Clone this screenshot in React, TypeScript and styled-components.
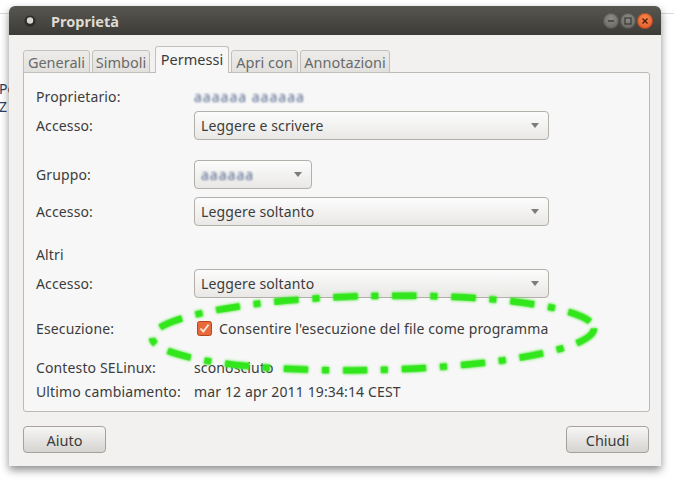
import React from 'react';
import styled, { createGlobalStyle } from 'styled-components';

const GlobalStyle = createGlobalStyle`
  html, body {
    margin: 0;
    padding: 0;
    background: #ffffff;
  }
  body {
    font-family: "Noto Sans", "DejaVu Sans", sans-serif;
    color: #3c3c3c;
  }
`;

const Desktop = styled.div`
  position: relative;
  width: 674px;
  height: 481px;
  overflow: hidden;
  background: #ffffff;
  padding: 6px 0 0 9px;
  box-sizing: border-box;
`;

const BackdropRule = styled.div`
  position: absolute;
  left: 0;
  right: 0;
  top: 13px;
  height: 1px;
  background: #d8d8d8;
`;

const BackdropText = styled.div`
  position: absolute;
  left: -1px;
  top: 80px;
  font-size: 14px;
  line-height: 18px;
  color: #2c3e63;
`;

const Window = styled.div`
  position: relative;
  z-index: 1;
  width: 652px;
  background: #f2f1f0;
  border-radius: 6px 6px 0 0;
  box-shadow: 0 4px 9px rgba(0, 0, 0, 0.45);
  display: flex;
  flex-direction: column;
`;

const TitleBar = styled.div`
  height: 29px;
  display: flex;
  align-items: center;
  padding: 0 8px 0 15px;
  border-radius: 6px 6px 0 0;
  background: linear-gradient(#57564f, #3c3b37);
`;

const Title = styled.span`
  margin-left: 15px;
  font-size: 14.5px;
  font-weight: bold;
  color: #dfdbd2;
  flex: 1;
`;

const Controls = styled.div`
  display: flex;
  gap: 1px;
`;

const CtlButton = styled.div<{ $close?: boolean }>`
  width: 16px;
  height: 16px;
  border-radius: 50%;
  display: flex;
  align-items: center;
  justify-content: center;
  background: ${(p) =>
    p.$close
      ? 'radial-gradient(circle at 50% 35%, #f7884e, #e0501f)'
      : 'radial-gradient(circle at 50% 35%, #8e8c86, #5f5d58)'};
  box-shadow: inset 0 0 0 1px rgba(0, 0, 0, 0.25);
`;

const Body = styled.div`
  padding: 12px 11px 13px 14px;
  display: flex;
  flex-direction: column;
`;

const TabStrip = styled.div`
  display: flex;
  align-items: flex-end;
  gap: 2px;
  height: 26px;
  margin-bottom: -1px;
  position: relative;
  z-index: 1;
`;

const Tab = styled.div<{ $w: number; $active?: boolean }>`
  width: ${(p) => p.$w}px;
  height: ${(p) => (p.$active ? 27 : 23)}px;
  margin-left: ${(p) => (p.$active ? 3 : 0)}px;
  box-sizing: border-box;
  border: 1px solid #c3c0bb;
  border-bottom: ${(p) => (p.$active ? 'none' : '1px solid #c3c0bb')};
  border-radius: 3px 3px 0 0;
  background: ${(p) => (p.$active ? '#f7f7f7' : 'linear-gradient(#edecea, #e3e1de)')};
  color: ${(p) => (p.$active ? '#3c3c3c' : '#6a6a6a')};
  font-size: 14.5px;
  display: flex;
  align-items: center;
  justify-content: center;
  padding-bottom: ${(p) => (p.$active ? 2 : 0)}px;
`;

const Panel = styled.div`
  height: 340px;
  box-sizing: border-box;
  border: 1px solid #bdbab5;
  border-radius: 0 3px 3px 3px;
  background: #f7f7f7;
  padding: 11px 12px 0 12px;
  display: flex;
  flex-direction: column;
`;

const Row = styled.div<{ $h?: number; $top?: number }>`
  display: grid;
  grid-template-columns: 158px auto;
  align-items: center;
  height: ${(p) => p.$h ?? 24}px;
  margin-top: ${(p) => p.$top ?? 0}px;
  font-size: 14px;
  letter-spacing: 0.13px;
`;

const Label = styled.span`
  color: #3c3c3c;
`;

const Value = styled.span`
  color: #3c3c3c;
`;

const Hidden = styled.span<{ $w: number }>`
  display: inline-block;
  width: ${(p) => p.$w}px;
  color: #56698f;
  filter: blur(1.1px);
  letter-spacing: 1px;
  white-space: nowrap;
  overflow: hidden;
`;

const Combo = styled.div<{ $w: number }>`
  width: ${(p) => p.$w}px;
  height: 29px;
  box-sizing: border-box;
  border: 1px solid #b3afa9;
  border-radius: 4px;
  background: linear-gradient(#fcfcfc, #e9e8e6);
  display: flex;
  align-items: center;
  justify-content: space-between;
  padding: 0 9px 0 6px;
  color: #3c3c3c;
`;

const Arrow = styled.span`
  width: 0;
  height: 0;
  border-left: 4px solid transparent;
  border-right: 4px solid transparent;
  border-top: 5px solid #7c7c7c;
`;

const CheckLine = styled.label`
  display: flex;
  align-items: center;
  gap: 7px;
  padding-left: 3px;
  color: #3c3c3c;
`;

const ButtonBar = styled.div`
  margin-top: 14px;
  display: flex;
  justify-content: space-between;
  padding-right: 1px;
`;

const DialogButton = styled.button`
  width: 83px;
  height: 27px;
  border: 1px solid #a5a29d;
  border-radius: 4px;
  background: linear-gradient(#f6f6f5, #d6d4d1);
  font-family: "Noto Sans", "DejaVu Sans", sans-serif;
  font-size: 14.5px;
  color: #3c3c3c;
  padding: 0;
`;

const Overlay = styled.svg`
  position: absolute;
  left: 0;
  top: 0;
  z-index: 2;
  pointer-events: none;
`;

const Checkbox = () => (
  <svg width="15" height="15" viewBox="0 0 15 15">
    <rect x="0.5" y="0.5" width="14" height="14" rx="2" fill="#e8693a" stroke="#b4471d" />
    <path d="M3.5 7.5 L6.3 10.6 L11.6 3.6" fill="none" stroke="#fbe6da" strokeWidth="1.8" />
  </svg>
);

const App: React.FC = () => {
  return (
    <>
      <GlobalStyle />
      <Desktop>
        <BackdropRule />
        <BackdropText>
          Pe
          <br />
          Z
        </BackdropText>
        <Window>
          <TitleBar>
            <svg width="12" height="12" viewBox="0 0 12 12">
              <circle cx="6" cy="6" r="5.5" fill="#2d2c29" />
              <circle cx="6" cy="5.5" r="3.2" fill="#d9d7d2" />
            </svg>
            <Title>Proprietà</Title>
            <Controls>
              <CtlButton>
                <svg width="8" height="8" viewBox="0 0 8 8">
                  <path d="M1 4 H7" stroke="#3a3935" strokeWidth="1.4" />
                </svg>
              </CtlButton>
              <CtlButton>
                <svg width="8" height="8" viewBox="0 0 8 8">
                  <rect x="1" y="1" width="6" height="6" fill="none" stroke="#3a3935" strokeWidth="1.2" />
                </svg>
              </CtlButton>
              <CtlButton $close>
                <svg width="8" height="8" viewBox="0 0 8 8">
                  <path d="M1.5 1.5 L6.5 6.5 M6.5 1.5 L1.5 6.5" stroke="#4a1a08" strokeWidth="1.3" />
                </svg>
              </CtlButton>
            </Controls>
          </TitleBar>
          <Body>
            <TabStrip>
              <Tab $w={67}>Generali</Tab>
              <Tab $w={58}>Simboli</Tab>
              <Tab $w={74} $active>Permessi</Tab>
              <Tab $w={67}>Apri con</Tab>
              <Tab $w={90}>Annotazioni</Tab>
            </TabStrip>
            <Panel>
              <Row>
                <Label>Proprietario:</Label>
                <Hidden $w={128}>aaaaaa aaaaaa</Hidden>
              </Row>
              <Row $h={29} $top={3}>
                <Label>Accesso:</Label>
                <Combo $w={355}>
                  Leggere e scrivere
                  <Arrow />
                </Combo>
              </Row>
              <Row $h={29} $top={20}>
                <Label>Gruppo:</Label>
                <Combo $w={118}>
                  <Hidden $w={58}>aaaaaa</Hidden>
                  <Arrow />
                </Combo>
              </Row>
              <Row $h={29} $top={8}>
                <Label>Accesso:</Label>
                <Combo $w={355}>
                  Leggere soltanto
                  <Arrow />
                </Combo>
              </Row>
              <Row $top={16}>
                <Label>Altri</Label>
              </Row>
              <Row $h={29} $top={3}>
                <Label>Accesso:</Label>
                <Combo $w={355}>
                  Leggere soltanto
                  <Arrow />
                </Combo>
              </Row>
              <Row $top={18}>
                <Label>Esecuzione:</Label>
                <CheckLine>
                  <Checkbox />
                  Consentire l'esecuzione del file come programma
                </CheckLine>
              </Row>
              <Row $top={15}>
                <Label>Contesto SELinux:</Label>
                <Value>sconosciuto</Value>
              </Row>
              <Row>
                <Label>Ultimo cambiamento:</Label>
                <Value>mar 12 apr 2011 19:34:14 CEST</Value>
              </Row>
            </Panel>
            <ButtonBar>
              <DialogButton>Aiuto</DialogButton>
              <DialogButton>Chiudi</DialogButton>
            </ButtonBar>
          </Body>
        </Window>
        <Overlay width="674" height="481" viewBox="0 0 674 481">
          <defs>
            <filter id="glow" x="-10%" y="-30%" width="120%" height="160%">
              <feGaussianBlur stdDeviation="1.6" result="b" />
              <feMerge>
                <feMergeNode in="b" />
                <feMergeNode in="SourceGraphic" />
              </feMerge>
            </filter>
          </defs>
          <ellipse
            cx="373"
            cy="333"
            rx="221"
            ry="37"
            transform="rotate(-1.2 373 333)"
            fill="none"
            stroke="#33e61c"
            strokeWidth="6.5"
            strokeDasharray="24 14 7 14"
            filter="url(#glow)"
          />
        </Overlay>
      </Desktop>
    </>
  );
};

export default App;
